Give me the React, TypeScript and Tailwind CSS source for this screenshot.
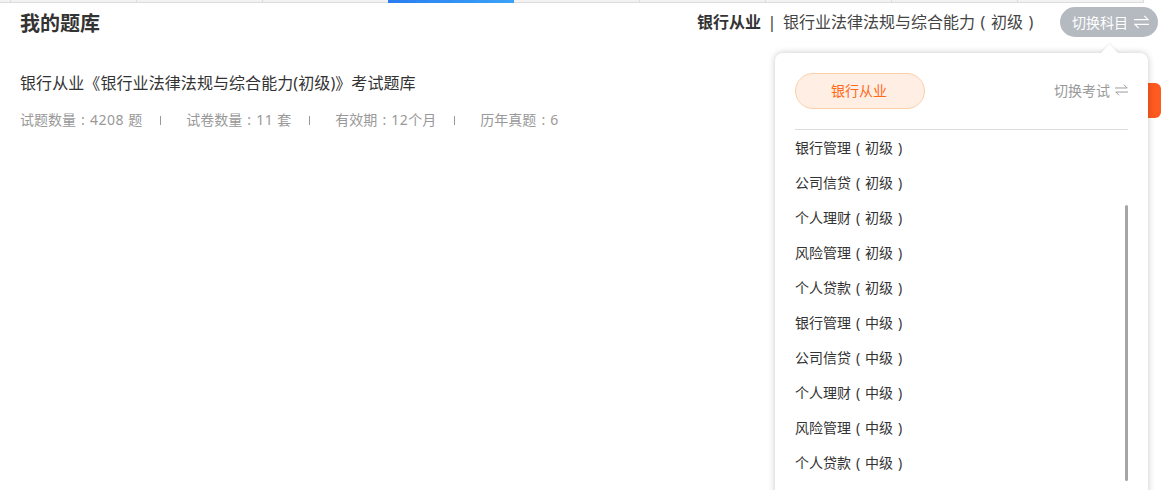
import React from 'react';

const font = { fontFamily: '"Noto Sans", "Noto Sans CJK SC", sans-serif' };

const subjects = [
  ['银行管理', '初级'],
  ['公司信贷', '初级'],
  ['个人理财', '初级'],
  ['风险管理', '初级'],
  ['个人贷款', '初级'],
  ['银行管理', '中级'],
  ['公司信贷', '中级'],
  ['个人理财', '中级'],
  ['风险管理', '中级'],
  ['个人贷款', '中级'],
];

const SwapIcon = ({ className }: { className: string }) => (
  <svg viewBox="0 0 16 14" fill="none" stroke="currentColor" strokeWidth="1.2" className={className}>
    <path d="M0 4.5H15L11 .5" />
    <path d="M16 9.5H1L5 13.5" />
  </svg>
);

// full-width slot with the glyph centred, the way the page's font sets （ ） and ：
const Slot = ({ children }: { children: string }) => (
  <span className="inline-block w-[1em] text-center">{children}</span>
);

const Num = ({ children }: { children: string }) => <span className="tracking-[0.5px]">{children}</span>;

const Sep = () => <span className="ml-[18px] mr-[25px] h-[9px] w-px bg-[#999]" />;

export default function App() {
  return (
    <div className="relative h-[490px] w-[1161px] overflow-hidden bg-white text-[#333]" style={font}>
      {/* top tabs */}
      <div className="flex h-[3px]">
        <div className="h-[3px] w-[10px] border-b border-[#dcdcdc] bg-[#f2f2f2]" />
        {[0, 1, 2].map((i) => (
          <div key={i} className="h-[3px] w-[126px] border-b border-l border-[#dcdcdc] bg-[#f2f2f2]" />
        ))}
        <div className="h-[3px] w-[126px] bg-gradient-to-r from-[#2b7df0] to-[#3ba3f7]" />
        {[0, 1, 2, 3, 4].map((i) => (
          <div key={i} className="h-[3px] w-[126px] border-b border-r border-[#dcdcdc] bg-[#f2f2f2]" />
        ))}
      </div>

      {/* header */}
      <div className="flex h-[38px] items-start justify-between pl-5 pr-[3px] pt-[4px]">
        <h1 className="mt-[3px] text-[20px] font-bold leading-[28px] text-[#333]">我的题库</h1>
        <div className="flex items-center">
          <span className="text-[16px] font-bold">银行从业</span>
          <span className="w-[22px] text-center text-[16px]">|</span>
          <span className="text-[16px] text-[#444]">
            银行业法律法规与综合能力<Slot>(</Slot>初级<Slot>)</Slot>
          </span>
          <button className="ml-[21px] flex h-[30px] w-[98px] items-center gap-[6px] rounded-full bg-[#b5bac0] pl-[12px] text-[14px] text-white">
            切换科目
            <SwapIcon className="h-[14px] w-[15px]" />
          </button>
        </div>
      </div>

      {/* course info */}
      <div className="pl-5 pt-[30px]">
        <p className="text-[16px] leading-[24px] tracking-[0.08px] text-[#333]">银行从业《银行业法律法规与综合能力(初级)》考试题库</p>
        <div className="mt-[15px] flex items-center text-[14px] leading-[20px] text-[#999]">
          <span>试题数量<Slot>:</Slot><Num>4208 </Num>题</span>
          <Sep />
          <span>试卷数量<Slot>:</Slot><Num>11 </Num>套</span>
          <Sep />
          <span>有效期<Slot>:</Slot><Num>12</Num>个月</span>
          <Sep />
          <span>历年真题<Slot>:</Slot><Num>6</Num></span>
        </div>
      </div>

      {/* button peeking out behind the popover */}
      <div className="absolute left-[1100px] top-[83px] h-[35px] w-[61px] rounded-md bg-[#ff5a1f]" />

      {/* subject popover */}
      <div className="absolute left-[775px] top-[53px] h-[460px] w-[373px] rounded-lg bg-white px-5 pt-5 shadow-[0_0_7px_rgba(0,0,0,0.22)]">
        <div className="absolute left-[328px] top-[-6px] h-[13px] w-[13px] rotate-45 bg-white shadow-[-1px_-1px_2px_rgba(0,0,0,0.07)]" />
        <div className="relative flex h-[57px] items-start justify-between border-b border-[#ddd]">
          <div className="flex h-[36px] w-[130px] items-center justify-center rounded-full border border-[#fdcfa8] bg-[#ffeee3] pb-[2px] pr-[2px] text-[14px] text-[#ff6a1a]">
            银行从业
          </div>
          <div className="flex h-[36px] items-center gap-[5px] pb-[2px] text-[14px] text-[#999]">
            切换考试
            <SwapIcon className="h-[12px] w-[13px]" />
          </div>
        </div>
        <ul>
          {subjects.map(([name, level]) => (
            <li key={name + level} className="flex h-[35px] items-center text-[14px] text-[#333]">
              <span>
                {name}<Slot>(</Slot>{level}<Slot>)</Slot>
              </span>
            </li>
          ))}
        </ul>
        <div className="absolute left-[350px] top-[152px] h-[276px] w-[3px] rounded-full bg-[#a6a6a6]" />
      </div>
    </div>
  );
}
